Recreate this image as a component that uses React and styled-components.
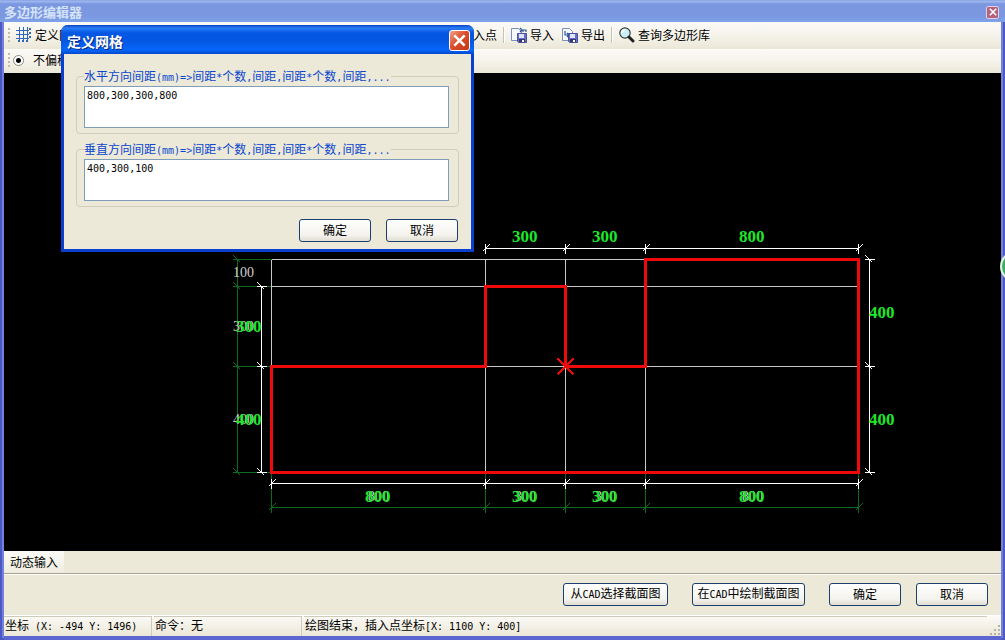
import React from 'react';
import styled, { createGlobalStyle } from 'styled-components';

const GlobalStyle = createGlobalStyle`
  *, *::before, *::after {
    box-sizing: border-box;
  }
  body {
    margin: 0;
    font-family: "Noto Sans CJK SC", sans-serif;
    font-size: 12px;
    line-height: 16px;
    color: #000;
  }
  button, textarea, input {
    font: inherit;
    color: inherit;
  }
`;

const columns = [271, 485, 565, 645, 858];
const rows = [259, 286, 366, 472];
const outline = '271,472 271,366 485,366 485,286 565,286 565,366 645,366 645,259 858,259 858,472';

const GridIcon = () => (
  <svg width="16" height="16" viewBox="0 0 16 16" fill="none" stroke="#2f66b8" aria-hidden="true">
    <path d="M0 3.500h13M0 7.500h13M0 11.500h13M3.500 0v13M7.500 0v13M11.500 0v13" />
    <path d="M14 1v2M14 5v2M14 9v2M2 14h2M6 14h2M10 14h2" strokeWidth="2" />
  </svg>
);

const DiskIcon = ({ arrow }) => (
  <svg width="16" height="16" viewBox="0 0 16 16" aria-hidden="true">
    <path d="M.5 1.500h7l3 3v9H.5z" fill="#f6f9ff" stroke="#7b90bd" />
    <path d="M6.500 6.500h9v9h-8l-1-1z" fill="#6a6fc8" stroke="#4a4f9c" />
    <path d="M8 7h5v4H8z" fill="#dfe5fa" />
    <path d="M8 12h6v3H8z" fill="#34386f" />
    <path d="M11 13h2v2h-2z" fill="#fff" />
    <path d={arrow} fill="none" stroke="#2f5592" strokeWidth="1.2" />
  </svg>
);

const SearchIcon = () => (
  <svg width="16" height="16" viewBox="0 0 16 16" aria-hidden="true">
    <circle cx="6" cy="6" r="5.200" fill="#c8eef6" stroke="#3a3a3a" strokeWidth="1.200" />
    <path d="M3 6a3 3 0 0 1 3-3" fill="none" stroke="#fff" strokeWidth="1.500" />
    <path d="M10 10l4 4" stroke="#222" strokeWidth="3" strokeLinecap="round" />
  </svg>
);

const CloseIcon = ({ size }) => (
  <svg width={size} height={size} viewBox="0 0 10 10" aria-hidden="true">
    <path d="M1 1l8 8M9 1L1 9" stroke="#fff" strokeWidth="2" />
  </svg>
);

// Dimension line along x with a slash at every stop
const DimensionX = ({ stops, y, color }) => (
  <g stroke={color}>
    <path d={`M${stops[0]} ${y}H${stops[stops.length - 1]}`} />
    {stops.map((x) => (
      <path key={x} d={`M${x} ${y - 5}V${y + 5}M${x - 3} ${y + 3}l7 -7`} />
    ))}
  </g>
);

const DimensionY = ({ stops, x, color }) => (
  <g stroke={color}>
    <path d={`M${x} ${stops[0]}V${stops[stops.length - 1]}`} />
    {stops.map((y) => (
      <path key={y} d={`M${x - 5} ${y}H${x + 5}M${x - 4} ${y - 4}l7 7`} />
    ))}
  </g>
);

const Drawing = () => (
  <Sheet>
    <g transform="translate(-3.500 -72.500)" fill="none">
      <g stroke="#0b6b20">
        {columns.map((x) => <path key={x} d={`M${x} 472V511`} />)}
        {rows.map((y) => <path key={y} d={`M232 ${y}H271`} />)}
      </g>
      <DimensionX stops={columns} y={507} color="#0b6b20" />
      <DimensionY stops={rows} x={237} color="#0b6b20" />
      <g stroke="#c8c8c8">
        {columns.map((x) => <path key={x} d={`M${x} 259V472`} />)}
        {rows.map((y) => <path key={y} d={`M271 ${y}H858`} />)}
      </g>
      <DimensionX stops={columns.slice(1)} y={248} color="#fff" />
      <DimensionX stops={columns} y={483} color="#fff" />
      <DimensionY stops={[286, 366, 472]} x={261} color="#fff" />
      <DimensionY stops={[259, 366, 472]} x={869} color="#fff" />
      <polygon points={outline} stroke="#ee0a0a" strokeWidth="3" />
      <path d="M557 358l16 16M573 358l-16 16" stroke="#ee0a0a" strokeWidth="2" />
    </g>
    <g transform="translate(-4 -73)">
      <GridValue x="233" y="277">100</GridValue>
      <GridValue x="233" y="331">300</GridValue>
      <GridValue x="233" y="424">400</GridValue>
      <GridValue x="368" y="501">800</GridValue>
      <GridValue x="515" y="501">300</GridValue>
      <GridValue x="595" y="501">300</GridValue>
      <GridValue x="742" y="501">800</GridValue>
      <Value x="512" y="242">300</Value>
      <Value x="592" y="242">300</Value>
      <Value x="739" y="242">800</Value>
      <Value x="236" y="332">300</Value>
      <Value x="236" y="425">400</Value>
      <Value x="869" y="318">400</Value>
      <Value x="869" y="425">400</Value>
      <Value x="365" y="502">800</Value>
      <Value x="512" y="502">300</Value>
      <Value x="592" y="502">300</Value>
      <Value x="739" y="502">800</Value>
    </g>
  </Sheet>
);

const SpacingField = ({ id, direction, value }) => (
  <Group>
    <legend>
      <label htmlFor={id}>
        {direction}方向间距<Half>(mm)=&gt;</Half>间距<Half>*</Half>个数<Half>,</Half>间距<Half>,</Half>间距<Half>*</Half>个数<Half>,</Half>间距<Half>,...</Half>
      </label>
    </legend>
    <SpacingInput id={id} defaultValue={value} spellCheck={false} />
  </Group>
);

const GridDialog = () => (
  <Dialog role="dialog" aria-labelledby="dialog-title">
    <DialogTitleBar>
      <DialogTitle id="dialog-title">定义网格</DialogTitle>
      <DialogClose type="button" aria-label="取消"><CloseIcon size={13} /></DialogClose>
    </DialogTitleBar>
    <DialogBody>
      <SpacingField id="horizontal" direction="水平" value="800,300,300,800" />
      <SpacingField id="vertical" direction="垂直" value="400,300,100" />
      <DialogActions>
        <Button type="button">确定</Button>
        <Button type="button">取消</Button>
      </DialogActions>
    </DialogBody>
  </Dialog>
);

const App = () => (
  <Window>
    <GlobalStyle />
    <TitleBar>
      <Title>多边形编辑器</Title>
      <WindowClose type="button" aria-label="取消"><CloseIcon size={8} /></WindowClose>
    </TitleBar>
    <Main>
      <Toolbar $height="27px">
        <Grip />
        <ToolGroup>
          <ToolButton type="button"><GridIcon />定义网格</ToolButton>
          <ToolButton type="button">插入点</ToolButton>
        </ToolGroup>
        <Divider />
        <ToolButton type="button"><DiskIcon arrow="M12 5V3h3v2M9 1l2 2-2 2" />导入</ToolButton>
        <ToolButton type="button"><DiskIcon arrow="M3 4v4h4M5 6l2 2-2 2" />导出</ToolButton>
        <Divider />
        <ToolButton type="button"><SearchIcon />查询多边形库</ToolButton>
      </Toolbar>
      <Toolbar $height="24px">
        <Grip />
        <Option><Radio type="radio" name="offset" defaultChecked />不偏移</Option>
      </Toolbar>
      <Canvas><Drawing /></Canvas>
      <InputStrip><InputToggle type="button">动态输入</InputToggle></InputStrip>
      <Actions>
        <Button type="button" $width="105px">从<Half>CAD</Half>选择截面图</Button>
        <Button type="button" $width="113px">在<Half>CAD</Half>中绘制截面图</Button>
        <ButtonPair>
          <Button type="button">确定</Button>
          <Button type="button">取消</Button>
        </ButtonPair>
      </Actions>
      <StatusBar>
        <StatusPane>坐标<Half> (X: -494 Y: 1496)</Half></StatusPane>
        <StatusPane>命令：无</StatusPane>
        <StatusPane $grow>绘图结束，插入点坐标<Half>[X: 1100 Y: 400]</Half></StatusPane>
        <svg width="12" height="12" viewBox="0 0 12 12" fill="#b8b4a2" aria-hidden="true">
          <path d="M9 1h2v2H9zM5 5h2v2H5zM9 5h2v2H9zM1 9h2v2H1zM5 9h2v2H5zM9 9h2v2H9z" />
        </svg>
      </StatusBar>
    </Main>
    <GridDialog />
    <SideBadge />
  </Window>
);

const Window = styled.div`
  position: relative;
  display: flex;
  flex-direction: column;
  min-height: 100vh;
  overflow: hidden;
  background: #7480da;
  box-shadow: inset 0 0 0 2px #4c58c4;
`;

const TitleBar = styled.header`
  display: flex;
  align-items: center;
  justify-content: space-between;
  height: 22px;
  padding: 2px 6px 0 4px;
  background: linear-gradient(#7b96de, #a3bcf0 1px, #7b97e0 4px, #7b97e0 16px, #7ea3e8);
`;

const Title = styled.h1`
  margin: 0;
  font-size: 13px;
  font-weight: 700;
  line-height: 18px;
  color: #d5e3fa;
`;

const CloseButton = styled.button`
  display: flex;
  align-items: center;
  justify-content: center;
  padding: 0;
`;

const WindowClose = styled(CloseButton)`
  width: 13px;
  height: 13px;
  border: 1px solid #dcd0ea;
  border-radius: 2px;
  background: #b5617c;
`;

const DialogClose = styled(CloseButton)`
  width: 21px;
  height: 21px;
  border: 1px solid #fff;
  border-radius: 3px;
  background: linear-gradient(135deg, #f0a58c, #dc4f2c 45%, #c23810);
`;

const Main = styled.main`
  flex: 1;
  display: flex;
  flex-direction: column;
  margin: 0 4px;
  border-bottom: 4px solid #5b66d2;
  background: #ece9d8;
`;

const Toolbar = styled.div`
  display: flex;
  align-items: center;
  height: ${({ $height }) => $height};
  padding: 0 4px 2px;
  background: linear-gradient(#fbfaf6, #f5f3ea 50%, #ebe7d7);
`;

const Grip = styled.span`
  width: 2px;
  height: 14px;
  margin-right: 2px;
  background: repeating-linear-gradient(#c1bda9 0 2px, transparent 2px 4px);
`;

const ToolGroup = styled.div`
  display: flex;
  justify-content: space-between;
  width: 489px;
`;

const ToolButton = styled.button`
  display: flex;
  align-items: center;
  gap: 3px;
  padding: 0 4px;
  border: 0;
  background: none;
  white-space: nowrap;
`;

const Divider = styled.span`
  width: 2px;
  height: 16px;
  margin: 0 2px;
  border-left: 1px solid #c5c2b0;
  border-right: 1px solid #fff;
`;

const Option = styled.label`
  display: flex;
  align-items: center;
  gap: 9px;
`;

const Radio = styled.input`
  appearance: none;
  width: 11px;
  height: 11px;
  margin: 0 0 0 1px;
  border: 1px solid #8a8a82;
  border-radius: 50%;
  background: #fff;

  &:checked {
    background: radial-gradient(circle, #000 0 2px, #fff 3px);
  }
`;

const Canvas = styled.section`
  flex: 1;
  display: flex;
  min-height: 440px;
  background: #000;
`;

const Sheet = styled.svg`
  flex: 1;
  shape-rendering: crispEdges;
`;

const Value = styled.text`
  font: bold 17px "Liberation Serif", serif;
  fill: #1fe62a;
`;

const GridValue = styled.text`
  font: 14px "Liberation Serif", serif;
  fill: #d0d0d0;
`;

const InputStrip = styled.div`
  display: flex;
  height: 23px;
  border-bottom: 1px solid #a5a293;
`;

const InputToggle = styled.button`
  padding: 0 6px;
  border: 0;
  background: linear-gradient(#fbfaf6, #efecdf);
`;

const Actions = styled.div`
  display: flex;
  align-items: center;
  justify-content: flex-end;
  gap: 24px;
  height: 41px;
  padding: 0 13px 2px 4px;
  border-top: 1px solid #fff;
`;

const ButtonPair = styled.div`
  display: flex;
  gap: 15px;
`;

const Button = styled.button`
  width: ${({ $width }) => $width || '72px'};
  height: 23px;
  padding: 0 0 1px;
  border: 1px solid #1c3f70;
  border-radius: 3px;
  background: linear-gradient(#fff, #f4f3ee 70%, #e2dfd3);
  line-height: 16px;
  white-space: nowrap;
`;

const StatusBar = styled.footer`
  display: flex;
  align-items: flex-end;
  gap: 2px;
  height: 21px;
  border-top: 1px solid #fff;
  background: linear-gradient(#fbfaf6, #ebe7d7);
`;

const StatusPane = styled.span`
  flex: ${({ $grow }) => ($grow ? '1' : '0 0 148px')};
  height: 20px;
  padding: 0 1px;
  border-top: 1px solid #cfcbbb;
  border-right: ${({ $grow }) => ($grow ? '0' : '1px solid #cfcbbb')};
  line-height: 16px;
  white-space: pre;
`;

// Half-width characters take half the advance of a full-width one
const Half = styled.span`
  font-family: "DejaVu Sans Mono", monospace;
  font-size: 10px;
`;

const Dialog = styled.section`
  position: absolute;
  top: 25px;
  left: 61px;
  width: 413px;
  border: solid #0a3fd0;
  border-width: 0 3px 3px;
  border-radius: 7px 7px 0 0;
  background: #ece9d8;
`;

const DialogTitleBar = styled.header`
  display: flex;
  align-items: center;
  justify-content: space-between;
  height: 29px;
  margin: 0 -3px;
  padding: 2px 4px 0 6px;
  border-radius: 7px 7px 0 0;
  background: linear-gradient(#0842c0, #2a7cf5 3px, #0457e2 8px, #0457e2 16px, #0667fb 25px, #0348cc);
`;

const DialogTitle = styled.h2`
  margin: 0;
  font-size: 14px;
  font-weight: 700;
  line-height: 20px;
  color: #fff;
  text-shadow: 1px 1px #0a2a80;
`;

const DialogBody = styled.div`
  padding: 14px 12px 7px;
`;

const Group = styled.fieldset`
  min-width: 0;
  margin: 0 0 7px;
  padding: 2px 9px 5px 7px;
  border: 1px solid #d0cdba;
  border-radius: 4px;

  legend {
    padding: 0;
    color: #0a46d0;
    white-space: nowrap;
  }

  label {
    display: block;
    height: 16px;
  }
`;

const SpacingInput = styled.textarea`
  display: block;
  width: 100%;
  height: 42px;
  padding: 1px 2px;
  border: 1px solid #7f9db9;
  border-radius: 0;
  background: #fff;
  font: 10px/16px "DejaVu Sans Mono", monospace;
  resize: none;
`;

const DialogActions = styled.div`
  display: flex;
  justify-content: flex-end;
  gap: 15px;
  padding: 5px 1px 0 0;
`;

const SideBadge = styled.span`
  position: absolute;
  top: 251px;
  right: -26px;
  width: 31px;
  height: 31px;
  border: 2px solid #e4f4e8;
  border-radius: 50%;
  background: #3fae62;
`;

export default App;
